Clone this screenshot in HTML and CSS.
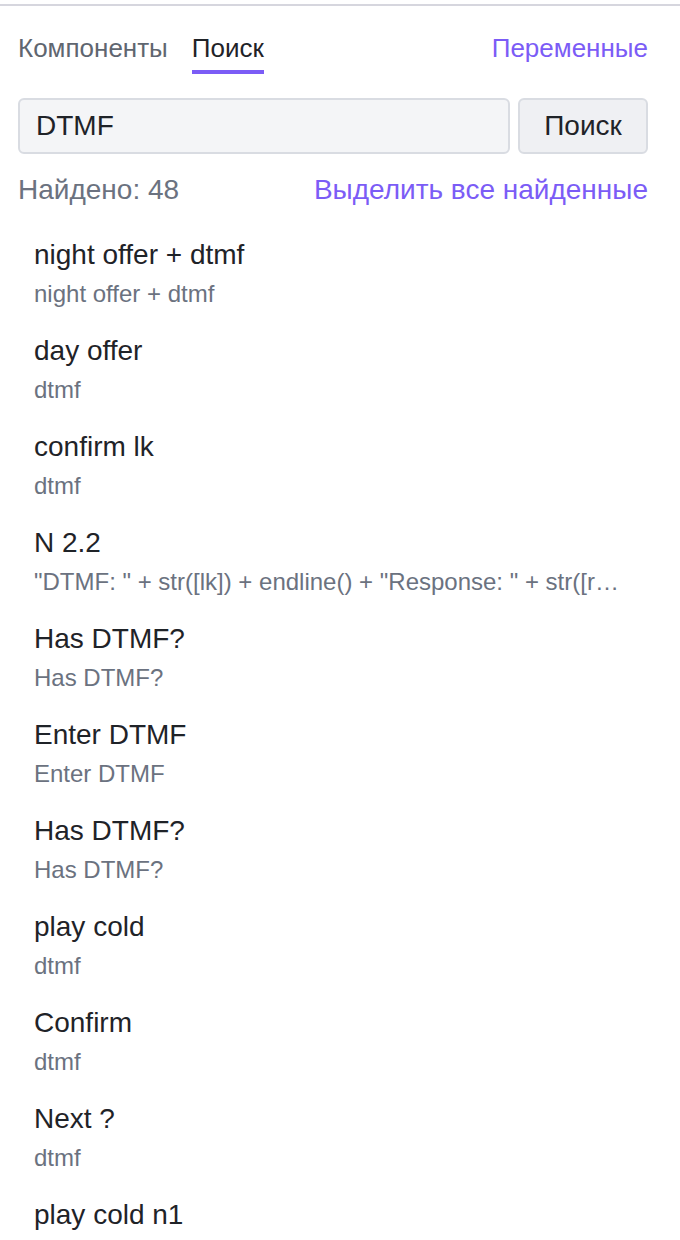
FILE: index.html
```html
<!DOCTYPE html>
<html lang="ru">
<head>
<meta charset="utf-8">
<title>Поиск</title>
<link rel="stylesheet" href="styles.css">
</head>
<body>
<div class="panel">
  <nav class="tabs">
    <div class="tab-group">
      <span class="tab">Компоненты</span>
      <span class="tab tab-active">Поиск</span>
    </div>
    <span class="tab tab-link">Переменные</span>
  </nav>
  <form class="search">
    <input class="search-input" type="text" value="DTMF">
    <button class="search-btn" type="button">Поиск</button>
  </form>
  <div class="summary">
    <span class="count">Найдено: 48</span>
    <span class="select-all">Выделить все найденные</span>
  </div>
  <ul class="results">
    <li class="item"><div class="item-title">night offer + dtmf</div><div class="item-sub">night offer + dtmf</div></li>
    <li class="item"><div class="item-title">day offer</div><div class="item-sub">dtmf</div></li>
    <li class="item"><div class="item-title">confirm lk</div><div class="item-sub">dtmf</div></li>
    <li class="item"><div class="item-title">N 2.2</div><div class="item-sub">"DTMF: " + str([lk]) + endline() + "Response: " + str([response])</div></li>
    <li class="item"><div class="item-title">Has DTMF?</div><div class="item-sub">Has DTMF?</div></li>
    <li class="item"><div class="item-title">Enter DTMF</div><div class="item-sub">Enter DTMF</div></li>
    <li class="item"><div class="item-title">Has DTMF?</div><div class="item-sub">Has DTMF?</div></li>
    <li class="item"><div class="item-title">play cold</div><div class="item-sub">dtmf</div></li>
    <li class="item"><div class="item-title">Confirm</div><div class="item-sub">dtmf</div></li>
    <li class="item"><div class="item-title">Next ?</div><div class="item-sub">dtmf</div></li>
    <li class="item"><div class="item-title">play cold n1</div><div class="item-sub">dtmf</div></li>
  </ul>
</div>
</body>
</html>
```
FILE: styles.css
```css
* { box-sizing: border-box; }
html, body { margin: 0; padding: 0; background: #ffffff; }
body {
  font-family: "Liberation Sans", Arial, sans-serif;
  color: #1f2328;
  height: 1240px;
  overflow: hidden;
}
.panel {
  margin-top: 4px;
  border-top: 2px solid #d6d6de;
  padding: 0 32px 0 18px;
}
.tabs {
  display: flex;
  justify-content: space-between;
  align-items: flex-start;
}
.tab-group { display: flex; gap: 24px; }
.tab {
  font-size: 26px;
  line-height: 32px;
  padding-top: 26px;
  padding-bottom: 6px;
  border-bottom: 4px solid transparent;
  color: #5f6670;
}
.tab-active { color: #1f2328; border-bottom-color: #7b5cf6; }
.tab-link { color: #7b5cf6; }
.search {
  display: flex;
  gap: 8px;
  margin: 24px 0 0;
}
.search-input {
  flex: 1;
  height: 56px;
  border: 2px solid #d9dce2;
  border-radius: 6px;
  background: #f4f5f7;
  font: 28px "Liberation Sans", Arial, sans-serif;
  color: #1f2328;
  padding: 0 16px;
  outline: none;
}
.search-btn {
  width: 130px;
  height: 56px;
  border: 2px solid #d9dce2;
  border-radius: 6px;
  background: #eff0f3;
  font: 28px "Liberation Sans", Arial, sans-serif;
  color: #1f2328;
  padding: 0;
}
.summary {
  display: flex;
  justify-content: space-between;
  margin-top: 18px;
  font-size: 28px;
  line-height: 36px;
}
.count { color: #6b7280; }
.select-all { color: #7b5cf6; }
.results {
  list-style: none;
  margin: 18px 0 0;
  padding: 0;
}
.item {
  padding: 9px 16px;
}
.item-title {
  font-size: 28px;
  line-height: 40px;
  color: #1f2328;
}
.item-sub {
  font-size: 24px;
  line-height: 38px;
  color: #6b7280;
  white-space: nowrap;
  overflow: hidden;
  text-overflow: ellipsis;
}
```
